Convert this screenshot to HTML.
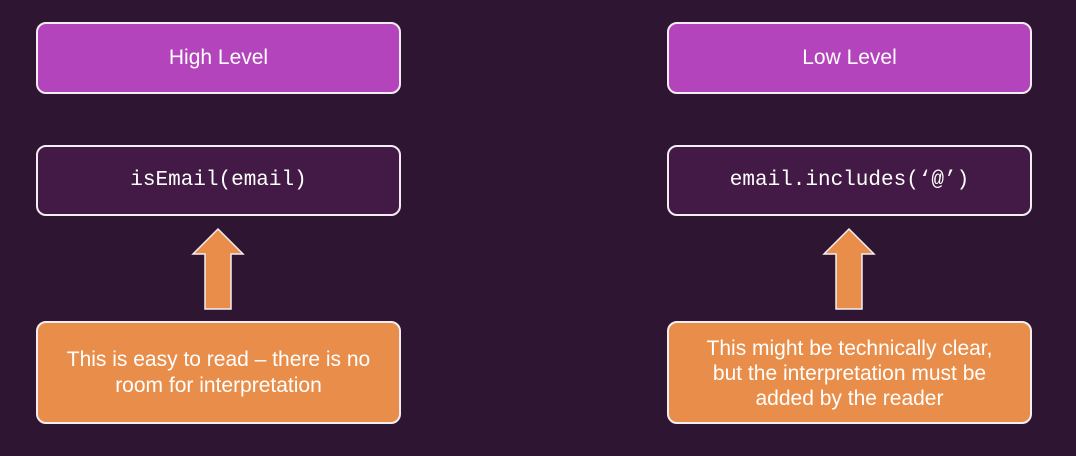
<!DOCTYPE html>
<html><head><meta charset="utf-8"><style>
html,body{margin:0;padding:0}
body{width:1076px;height:456px;background:#2e1531;position:relative;overflow:hidden;font-family:"Liberation Sans",sans-serif}
.b{position:absolute;box-sizing:border-box;border:2px solid #f4eef4;border-radius:10px;display:flex;align-items:center;justify-content:center;text-align:center;color:#fff}
.p{background:#b444bb;font-size:21px}
.c{background:#431a45;font-family:"Liberation Mono",monospace;font-size:21px}
.o{background:#e98e4a;font-size:21px;line-height:25px}
svg{position:absolute}
</style></head><body>
<div class="b p" style="left:36px;top:22px;width:365px;height:72px">High Level</div>
<div class="b p" style="left:667px;top:22px;width:365px;height:72px">Low Level</div>
<div class="b c" style="left:36px;top:145px;width:365px;height:71px">isEmail(email)</div>
<div class="b c" style="left:667px;top:145px;width:365px;height:71px">email.includes(‘@’)</div>
<div class="b o" style="left:36px;top:321px;width:365px;height:103px;line-height:26px">This is easy to read – there is no<br>room for interpretation</div>
<div class="b o" style="left:667px;top:321px;width:365px;height:103px;padding-top:2px">This might be technically clear,<br>but the interpretation must be<br>added by the reader</div>
<svg style="left:190px;top:226px" width="56" height="86"><path d="M28 3 L53 28 L41 28 L41 83 L15 83 L15 28 L3 28 Z" fill="#e98e4a" stroke="#f4eef4" stroke-width="1.5"/></svg>
<svg style="left:821px;top:226px" width="56" height="86"><path d="M28 3 L53 28 L41 28 L41 83 L15 83 L15 28 L3 28 Z" fill="#e98e4a" stroke="#f4eef4" stroke-width="1.5"/></svg>
</body></html>
